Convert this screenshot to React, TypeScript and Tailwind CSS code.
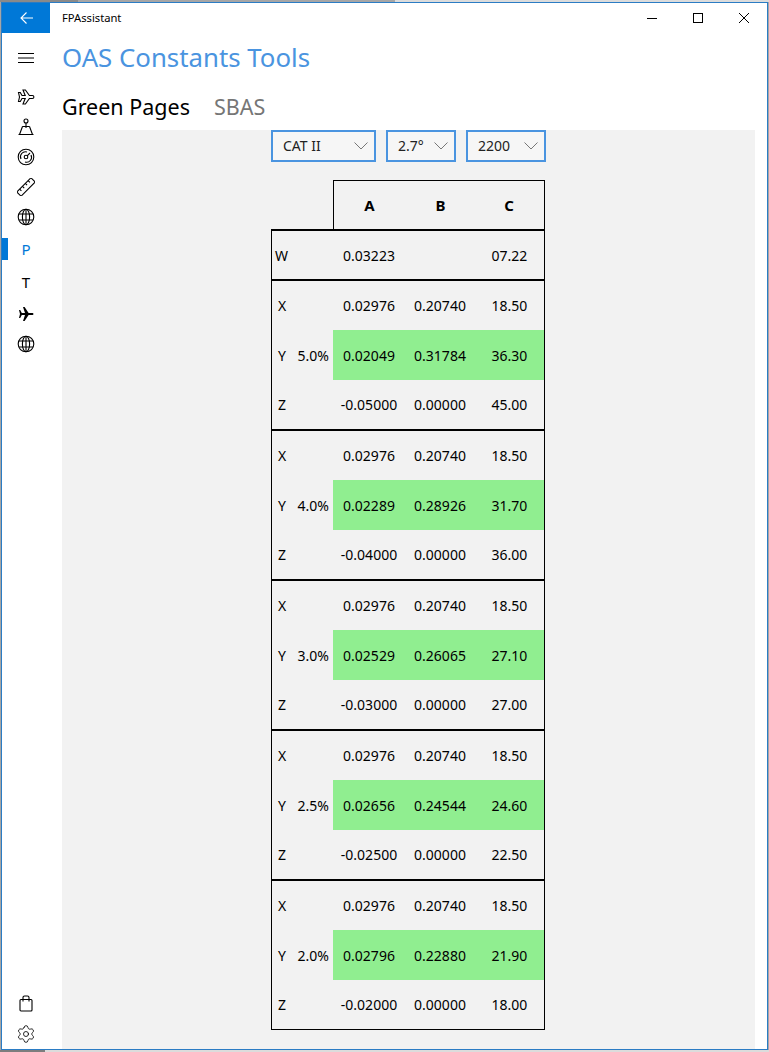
import { Settings } from "lucide-react";

const FONT = "font-['Noto_Sans','Open_Sans',sans-serif]";

interface RowData {
  label: string;
  pct?: string;
  a: string;
  b: string;
  c: string;
  height: string;
  labelPad?: string;
  green?: boolean;
}

const groups: { pct: string; y: string[]; z: string[] }[] = [
  { pct: "5.0%", y: ["0.02049", "0.31784", "36.30"], z: ["-0.05000", "0.00000", "45.00"] },
  { pct: "4.0%", y: ["0.02289", "0.28926", "31.70"], z: ["-0.04000", "0.00000", "36.00"] },
  { pct: "3.0%", y: ["0.02529", "0.26065", "27.10"], z: ["-0.03000", "0.00000", "27.00"] },
  { pct: "2.5%", y: ["0.02656", "0.24544", "24.60"], z: ["-0.02500", "0.00000", "22.50"] },
  { pct: "2.0%", y: ["0.02796", "0.22880", "21.90"], z: ["-0.02000", "0.00000", "18.00"] },
];

const ICON = { fill: "none", stroke: "currentColor", strokeWidth: 1.1 };

function PlaneOutline() {
  return (
    <svg width="18" height="18" viewBox="0 0 18 18" {...ICON}>
      <path d="M1.5 4.5h1.8L5 7.5h3.2L6 2h2.4l4 5.5h3a1.5 1.5 0 0 1 0 3h-3l-4 5.5H6l2.2-5.5H5l-1.7 3H1.5l1-4.5z" />
    </svg>
  );
}

function PlaneSolid() {
  return (
    <svg width="18" height="18" viewBox="0 0 18 18" fill="currentColor">
      <path d="M2 5h1.2l1.6 3H8L6 2h1.6l4 6h3.4c1 0 1.5.5 1.5 1s-.5 1-1.5 1h-3.4l-4 6H6l2-6H4.8l-1.6 3H2l1-4z" />
    </svg>
  );
}

function TowerIcon() {
  return (
    <svg width="18" height="18" viewBox="0 0 18 18" {...ICON}>
      <circle cx="9" cy="3" r="2" />
      <path d="M9 5v5M5.5 8.5h7M5.5 8.5L2.5 16.5h13L12.5 8.5M1.5 16.5h15" />
    </svg>
  );
}

function GaugeIcon() {
  return (
    <svg width="18" height="18" viewBox="0 0 18 18" {...ICON}>
      <circle cx="9" cy="9" r="7.8" />
      <path d="M4 11a5 5 0 0 1 6-7M14 7a5 5 0 0 1-6 7" />
      <circle cx="9" cy="9" r="1.8" />
      <path d="M10.2 7.8L13 5" />
    </svg>
  );
}

function RulerIcon() {
  return (
    <svg width="18" height="18" viewBox="0 0 18 18" {...ICON}>
      <g transform="rotate(-45 9 9)">
        <rect x="-1" y="6" width="20" height="6" />
        <path d="M3 6v2.5M7 6v2.5M11 6v2.5M15 6v2.5" />
      </g>
    </svg>
  );
}

function GlobeIcon() {
  return (
    <svg width="18" height="18" viewBox="0 0 18 18" {...ICON}>
      <circle cx="9" cy="9" r="7.8" />
      <ellipse cx="9" cy="9" rx="3.6" ry="7.8" />
      <path d="M9 1.2v15.6M2 6h14M2 12h14" />
    </svg>
  );
}

function BagIcon() {
  return (
    <svg width="14" height="18" viewBox="0 0 14 18" {...ICON}>
      <rect x="1" y="4.5" width="12" height="11.5" rx="1" />
      <path d="M4 6.5V2.5a1.5 1.5 0 0 1 1.5-1.5h3A1.5 1.5 0 0 1 10 2.5v4" />
    </svg>
  );
}

function Chevron() {
  return (
    <svg width="14" height="8" viewBox="0 0 14 8" fill="none" stroke="#777" strokeWidth="1">
      <path d="M.5.5L7 7l6.5-6.5" />
    </svg>
  );
}

function Dropdown({ value, width }: { value: string; width: string }) {
  return (
    <div className={`flex h-[32px] items-center justify-between border-2 border-[#4a94e0] bg-[#f6f6f6] pl-[10px] pr-[6px] text-[14px] text-[#222] ${width}`}>
      <span className="pb-[2px]">{value}</span>
      <Chevron />
    </div>
  );
}

function Row({ label, pct, a, b, c, height, labelPad = "pl-[6px]", green }: RowData) {
  return (
    <div className={`flex items-center text-[14px] text-black ${height}`}>
      <div className={`flex w-[61px] items-center justify-between pr-[4px] ${labelPad}`}>
        <span>{label}</span>
        {pct && <span>{pct}</span>}
      </div>
      <div className={`grid h-full flex-1 grid-cols-[72px_70px_69px] items-center text-center ${green ? "bg-[#90ee90]" : ""}`}>
        <span>{a}</span>
        <span>{b}</span>
        <span>{c}</span>
      </div>
    </div>
  );
}

function NavItem({ children, height = "h-[30px]" }: { children: React.ReactNode; height?: string }) {
  return <div className={`flex w-[48px] items-center justify-center ${height}`}>{children}</div>;
}

export default function App() {
  return (
    <div className={`flex h-[1052px] w-[769px] flex-col overflow-hidden bg-[#a6a6a6] ${FONT}`}>
      <div className="flex h-[2px]">
        <div className="w-[78px] bg-[#8a8a8a]" />
        <div className="w-[317px] bg-[#a6a6a6]" />
        <div className="flex-1 bg-[#dcdcdc]" />
      </div>
      <div className="ml-[1px] flex h-[1048px] w-[767px] flex-col border border-[#2b7cc4] bg-white">
        <div className="flex flex-1 overflow-hidden">
          <aside className="flex w-[60px] flex-col text-black">
            <div className="flex h-[30px] w-[48px] items-center justify-center bg-[#0078d7] text-white">
              <svg width="13" height="12" viewBox="0 0 13 12" fill="none" stroke="currentColor" strokeWidth="1.1">
                <path d="M6.5.5L1 6l5.5 5.5M1 6h12" />
              </svg>
            </div>
            <NavItem height="h-[49px]">
              <svg width="16" height="10" viewBox="0 0 16 10" fill="none" stroke="currentColor" strokeWidth="1">
                <path d="M0 .5h16M0 5h16M0 9.5h16" />
              </svg>
            </NavItem>
            <NavItem><PlaneOutline /></NavItem>
            <NavItem><TowerIcon /></NavItem>
            <NavItem><GaugeIcon /></NavItem>
            <NavItem><RulerIcon /></NavItem>
            <NavItem><GlobeIcon /></NavItem>
            <div className="mt-[1px] flex h-[32px] items-center">
              <div className="h-[22px] w-[6px] bg-[#0078d7]" />
              <span className="flex w-[36px] justify-center text-[15px] text-[#0078d7]">P</span>
            </div>
            <NavItem height="h-[34px] pt-[1px]"><span className="text-[15px]">T</span></NavItem>
            <NavItem><PlaneSolid /></NavItem>
            <NavItem><GlobeIcon /></NavItem>
            <div className="mt-auto" />
            <NavItem><BagIcon /></NavItem>
            <NavItem><Settings size={20} strokeWidth={1} /></NavItem>
          </aside>
          <main className="flex min-w-0 flex-1 flex-col">
            <div className="flex h-[30px] items-center justify-between">
              <span className="text-[11.2px] text-black">FPAssistant</span>
              <div className="flex items-center text-black">
                <div className="flex h-[30px] w-[46px] items-center justify-center">
                  <svg width="10" height="10" viewBox="0 0 10 10" stroke="currentColor" strokeWidth="1"><path d="M0 5.5h10" /></svg>
                </div>
                <div className="flex h-[30px] w-[46px] items-center justify-center">
                  <svg width="10" height="10" viewBox="0 0 10 10" fill="none" stroke="currentColor" strokeWidth="1"><rect x=".5" y=".5" width="9" height="9" /></svg>
                </div>
                <div className="flex h-[30px] w-[46px] items-center justify-center">
                  <svg width="10" height="10" viewBox="0 0 10 10" stroke="currentColor" strokeWidth="1"><path d="M0 0l10 10M10 0L0 10" /></svg>
                </div>
              </div>
            </div>
            <h1 className="h-[46px] text-[25.8px] leading-[48px] text-[#4a94e0]">OAS Constants Tools</h1>
            <div className="flex h-[51px] items-center gap-[24px] pt-[5px] text-[21.5px] leading-none">
              <span className="text-black">Green Pages</span>
              <span className="text-[#767676]">SBAS</span>
            </div>
            <div className="mr-[12px] flex flex-1 flex-col items-center bg-[#f2f2f2]">
              <div className="flex w-[275px] gap-[10px]">
                <Dropdown value="CAT II" width="w-[105px]" />
                <Dropdown value="2.7°" width="w-[70px]" />
                <Dropdown value="2200" width="w-[80px]" />
              </div>
              <div className="mt-[18px] w-[275px]">
                <div className="w-[274px]">
                  <div className="ml-[62px] grid h-[49px] grid-cols-[71px_71px_66px] items-center border border-b-0 border-black text-center text-[15px] font-bold text-black">
                    <span>A</span>
                    <span>B</span>
                    <span>C</span>
                  </div>
                  <div className="border-x border-b border-black">
                    <div className="border-t-2 border-black">
                      <Row label="W" a="0.03223" b="" c="07.22" height="h-[48px]" labelPad="pl-[3px]" />
                    </div>
                    {groups.map((g) => (
                      <div key={g.pct} className="border-t-2 border-black">
                        <Row label="X" a="0.02976" b="0.20740" c="18.50" height="h-[49px]" />
                        <Row label="Y" pct={g.pct} a={g.y[0]} b={g.y[1]} c={g.y[2]} height="h-[50px]" green />
                        <Row label="Z" a={g.z[0]} b={g.z[1]} c={g.z[2]} height="h-[49px]" />
                      </div>
                    ))}
                  </div>
                </div>
              </div>
            </div>
          </main>
        </div>
      </div>
      <div className="flex flex-1">
        <div className="w-[45px] bg-[#7d7d7d]" />
        <div className="flex-1 bg-[#dcdcdc]" />
      </div>
    </div>
  );
}
